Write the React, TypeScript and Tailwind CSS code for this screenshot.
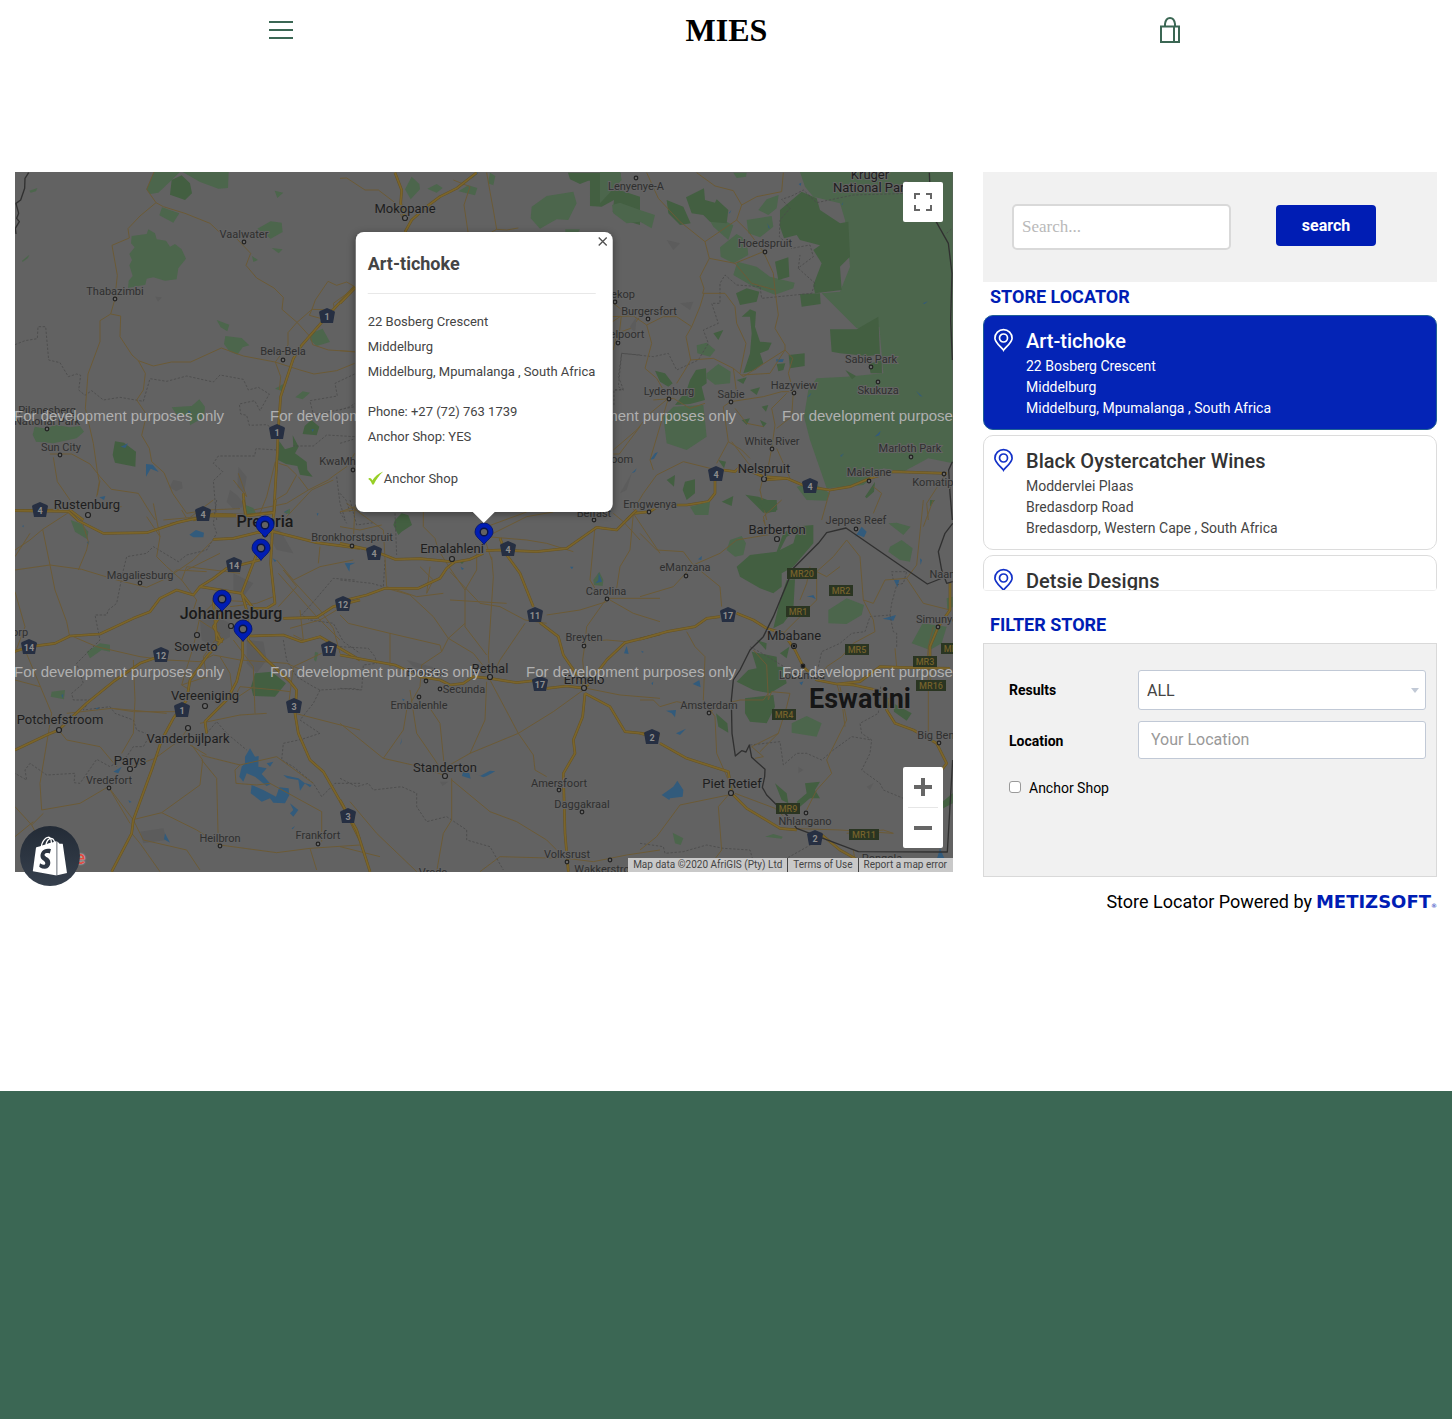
import React, { ChangeEvent, useState } from "react";
import { FaShopify } from "react-icons/fa";

interface Store {
  id: number;
  name: string;
  lines: string[];
}

interface MapSheet {
  x: number;
  y: number;
  park?: string;
  forest?: string;
  urban?: string;
  water?: string;
  dash?: string;
  road?: string;
  highway?: string;
  border?: string;
}

interface Place {
  name: string;
  x: number;
  y: number;
  size?: "md" | "lg" | "xl";
  dot?: [number, number];
}

const stores: Store[] = [
  {
    id: 1,
    name: "Art-tichoke",
    lines: ["22 Bosberg Crescent", "Middelburg", "Middelburg, Mpumalanga , South Africa"],
  },
  {
    id: 2,
    name: "Black Oystercatcher Wines",
    lines: ["Moddervlei Plaas", "Bredasdorp Road", "Bredasdorp, Western Cape , South Africa"],
  },
  { id: 3, name: "Detsie Designs", lines: [] },
];

// Each sheet is drawn at three times the map scale from its own origin
const sheets: MapSheet[] = [
  {
    x: 0,
    y: 160,
    park:
      "M395 228L440 222 445 208 465 220 470 238 498 242 510 260 525 252 545 268 558 296 535 325 530 358 495 362 460 352 440 356 436 374 384 384 386 362 398 348 388 316 396 300 388 282 404 262 393 250ZM440 88L462 36 540 36 505 70 475 98 450 102ZM548 36L686 36 684 84 655 86 600 66ZM486 142L538 160 520 188 478 166ZM772 206L812 184 845 188 848 216 812 236 788 220ZM824 92L850 98 832 114ZM88 92L112 84 108 94 92 98ZM66 302L88 284 84 294 68 306ZM650 480L688 494 682 514 662 502ZM676 528L725 534 748 556 728 562 712 584 688 574 672 552ZM932 520L968 506 990 546 950 558 930 540ZM515 742L575 738 598 718 615 740 612 772 570 796 568 766 530 764ZM104 800L140 806 165 794 210 802 240 798 252 815 230 835 160 850 108 845 98 824ZM815 264L848 268 836 280ZM756 288L774 300 760 306ZM825 686L850 672 848 694ZM886 712L908 694 930 698 908 718ZM760 1044L734 1034 738 1064 768 1060Z",
    forest:
      "M515 60L545 46 570 70 576 100 555 120 510 104ZM345 844L372 848 408 875 406 920 345 908 338 885ZM934 780L958 800 950 826 908 822 914 798ZM838 844L855 868 880 860 878 826 896 860 885 880 920 906 922 930 938 950 900 944 892 918 858 912 834 900Z",
    urban:
      "M715 920L740 950 732 1000 712 980ZM520 960L545 965 548 985 528 994 508 982ZM690 990L712 1006 738 1040 700 1046 680 1026ZM466 410L486 412 474 425Z",
    water:
      "M438 950L438 912 458 914 476 936 452 926ZM362 860L384 850 376 864ZM298 1012L316 1008 312 1020ZM564 750L574 758 566 760ZM934 808L942 808 938 816ZM852 1056L866 1048 860 1062Z",
    dash:
      "M45 554L75 542 112 536 114 500 137 500 146 600 180 608 205 650 230 642 242 646 236 690 255 706 275 692 310 720 360 712 430 724 450 656 500 664 560 648 640 666 660 645 730 658 745 690 775 682 808 702 780 752 764 722 718 732 722 762 740 766 748 796 800 794 840 820 830 870 768 866 764 888 655 888 640 910 668 935 640 962 650 1080M1064 642L1005 670 1012 708 930 722 940 765 1064 740M1064 830L980 825 940 858 880 858M1010 950L1020 1030 1036 1080",
    road:
      "M462 36L440 88 468 128 420 168 384 206 388 234 336 256 352 346 344 420 332 462 300 482 300 545 264 642 256 745 280 850 292 935 298 965 290 1010M468 128L490 140 555 160 630 190 660 218 710 236 752 280 738 316 770 354 822 384 850 412 846 448 892 488 932 532 938 554 985 570 1064 575M332 462L362 468 360 530 396 585 415 602 460 618 515 606 572 606 664 564 730 588 825 606 900 630 942 642 1010 632 1064 610M415 602L436 640 430 690 410 720 440 764 425 826 448 865 455 905 492 938 518 1000 560 1060M1064 384L1000 430 1004 450 936 448 946 420 984 364 1010 376 1040 366 1064 380M936 448L890 488 864 518 864 555 826 606 842 650 838 690M936 448L928 466 980 480M150 882L215 882 270 912 300 950 334 988 415 1000 446 1050 466 1080M160 892L172 965 210 1020 M300 962L292 1005M320 1042L365 1040M826 1020L860 1000 890 945 862 918 836 910M780 1060L800 1010 826 905M760 1050L860 1030 925 990 895 950M925 990L985 960 1000 948 1040 920 1064 880M860 1070L935 990 1000 960M560 1060L620 1050 720 1046M700 960L740 1010 715 940",
    highway:
      "M1064 380L980 470 905 556 880 596 842 710 834 820 832 880 820 1080M45 1052L210 1050 250 1080M580 1080L640 1062 740 1066 820 1056M730 1000L736 1066",
    border: "M86 38L75 55 74 85 62 120 48 130 56 160 50 175 58 185 46 205 48 222",
  },
  {
    x: 340,
    y: 160,
    park:
      "M195 88L215 50 238 72 240 88 212 118ZM262 86L290 72 308 84 290 98ZM355 94L385 76 412 84 405 106ZM450 38L466 48 460 76 444 70ZM575 140L620 108 700 95 710 130 685 180 650 178 600 206 572 175ZM676 208L720 208 715 216 676 216Z",
    forest:
      "M684 38L842 38 840 60 745 62 720 72 690 58ZM750 60L820 56 838 90 900 110 900 195 850 180 818 155 822 120 785 140 750 138Z",
    water: "M388 54L408 36 415 38 398 54ZM875 940L890 925 885 936Z",
    dash:
      "M900 585L845 580 835 680 850 690 822 690 822 740M0 750L30 740 45 730M0 850L40 838M0 1000L18 1020 30 1056M0 1056L20 1090",
    road:
      "M0 55L20 54 75 90 115 90 165 128 190 180M340 60L390 80 372 135 384 216M440 38L450 95 460 150 470 208 455 216M470 208L500 210 535 204M900 470L872 505 830 520 820 570M900 800L862 850 838 882 820 882M0 572L45 576M820 430L846 450 838 520M0 1056L45 1040 40 1140M900 1140L850 1085 820 1060M440 1130L560 1070 640 1056",
    highway: "M165 38L185 90 182 130 195 175M410 38L350 85 300 110 260 140 215 180 195 216M45 384L0 430",
  },
  {
    x: 600,
    y: 160,
    park:
      "M600 36L1058 36 1058 910 985 895 910 935 850 925 790 975 680 985 630 840 612 770 625 690 650 655 740 650 850 640 838 500 770 505 665 400 720 395 750 320 735 180 720 130 640 110 615 80ZM0 36L60 36 65 60 0 130ZM36 135L60 128 120 150 165 165 155 205 120 185 80 190 40 160ZM320 165L370 180 400 196 385 240 340 200ZM360 262L410 222 440 240 445 285 400 310 362 290ZM400 345L412 305 470 320 510 350 584 368 580 385 525 404 460 380ZM475 150L500 118 536 105 530 145 505 165ZM440 180L515 168 520 200 480 232 445 220ZM320 640L355 612 392 635 390 670 345 674 320 655ZM190 770L220 740 310 735 320 830 260 870 200 850ZM590 980L640 968 690 1000 680 1022 620 1020ZM290 556L320 548 346 570 330 590 292 580ZM400 38L440 38 438 50 410 54Z",
    forest:
      "M258 112L312 85 315 120 345 128 350 118 385 150 380 190 330 185 310 165 275 160ZM200 120L250 140 272 190 240 195 205 160ZM540 150L605 95 650 115 660 150 720 190 745 185 750 290 720 320 725 390 645 400 640 375 665 310 640 270 660 256 600 240 590 225 552 235 540 200ZM525 305L565 292 568 350 535 360ZM600 402L660 400 662 432 605 440ZM690 508L770 508 835 470 840 585 800 588 720 580 695 575ZM566 585L614 580 614 618 570 625ZM165 632L195 640 218 670 205 680 180 665ZM288 630L318 625 320 670 305 680 315 720 270 732 225 735 260 690 270 660ZM436 1004L475 1010 530 1030 528 1055 490 1058ZM736 630L768 648 756 658ZM806 612L845 600 846 640 812 640ZM795 1010L825 965 822 995 800 1015ZM408 400L440 385 478 395 470 425 420 435ZM425 470L450 448 468 455 465 500 480 545 515 548 505 570 480 580 490 610 465 630 430 640 450 580 455 520 450 470ZM200 960L225 945 222 980ZM255 965L285 958 285 1000 260 1020 248 990ZM410 660L440 652 430 672ZM450 690L480 682 470 705ZM485 740L505 735 498 755ZM425 780L450 775 440 795ZM480 780L500 790 490 802ZM530 612L556 610 550 630 535 634ZM340 520L370 510 355 540ZM355 900L378 905 372 925ZM365 1025L400 1008 395 1038Z",
    urban: "M0 570L20 560 15 600ZM90 500L110 470 105 520ZM240 430L280 425 270 450ZM200 240L240 250 220 270ZM60 1000L95 940 80 990Z",
    water:
      "M150 900L165 880 174 876 162 896ZM528 598L552 598 548 606 530 606ZM724 136L730 126 728 134ZM386 160L394 150 390 160ZM502 190L510 205 506 205ZM596 72L604 68 602 78ZM622 712L634 698 630 708ZM948 692L968 710 960 708ZM720 888L732 880 724 890ZM824 830L842 812 838 826ZM784 544L804 546ZM968 430L984 424 974 432Z",
    dash:
      "M990 85L930 100 760 105 650 128 610 90 575 108 545 118 570 145 540 180 538 230 575 265 630 255 640 290 600 320 595 325 645 370 635 400 485 415 480 380 410 375 375 345 360 370 360 430 335 430 355 490 310 510 325 550 295 600 230 630 205 580 160 590 65 580 55 650 70 688 40 690M595 325L600 285M1040 220L1056 205",
    road:
      "M140 38L175 115 240 185 315 245 328 295 405 310 455 370 525 390M290 38L345 78 400 92 425 135 410 180 315 245M425 135L470 110 545 95 550 38M410 180L445 215 490 275 520 340 525 390 535 465 525 505 555 555 555 570 430 650 400 625M328 295L300 350 312 385 308 400 375 400 405 440 410 490 438 550 420 640M490 275L405 310M312 400L300 440 275 500 258 530 272 600 255 630 230 670M275 500L230 470 190 470 140 495 155 550 135 625 170 655 205 715 150 760 110 810 40 870M555 570L578 595 565 640 580 695 545 695 490 710 392 725 370 740 385 845 350 910M205 715L150 900 160 930M560 700L515 745 525 795 515 865 500 945M580 695L575 770 530 805M395 845L445 910 490 950M405 745L440 790 490 800M385 845L425 870 450 895M350 930L250 905 170 945 130 1000 100 1050M272 600L340 595 400 625M400 625L410 700M425 645L510 640 555 570M160 720L220 715 270 745 315 730M490 950L480 990 500 1080M690 990L665 1080M820 980L845 1000 820 1060M1035 945L980 1030 985 1080M30 470L100 468 140 495M0 540L30 490 60 470M530 865L570 955",
    highway:
      "M345 940L345 1000 325 1025 260 1035 180 1035 150 1055 100 1060 80 1080M370 930L405 935 420 920 490 950 560 955 620 980 690 990 750 980 810 955 880 935 1040 940M490 960L560 955",
    border: "M988 38L990 85 1000 170 1045 250 1056 340 1052 480 1057 600M1057 905L1046 930 1050 1000 1057 1080",
  },
  {
    x: 0,
    y: 500,
    park:
      "M212 60L245 72 265 95 262 118 225 95ZM260 455L300 430 330 434 330 455 305 450 270 475ZM155 575L195 570 192 598 152 590ZM945 455L955 458 948 485 942 480ZM735 15L765 30 740 35ZM852 38L870 26 870 42Z",
    forest: "M765 520L815 515 858 550 825 590 760 588 753 560Z",
    urban:
      "M600 360L650 350 690 370 690 410 640 440 605 420ZM740 420L790 425 800 480 770 520 740 490ZM790 80L840 90 880 160 830 150ZM420 995L490 985 500 1020 430 1030ZM700 220L760 250 730 290 700 270Z",
    water:
      "M568 104L588 90 612 98 610 112 580 112ZM750 745L765 770 776 768 775 800 800 805 785 822 812 852 800 858 765 830 740 820 730 845 718 830 725 800 735 790 735 770ZM800 790L820 785 810 800ZM850 825L895 835 915 850 900 872 895 840 862 835ZM755 855L790 870 828 890 838 862 866 865 868 885 855 910 820 908 810 895 785 905 752 880ZM870 910L895 930 880 950 870 940 880 930ZM340 815L365 800 355 820ZM495 1000L510 1028 492 1018ZM1034 190L1066 188 1050 196 1048 215ZM285 625L300 622 292 630ZM184 585L190 582 188 595ZM385 900L395 906 388 908ZM818 175L830 182 824 186ZM66 78L72 76 70 82ZM260 126L268 124 265 134ZM950 40L956 40 952 48ZM912 848L935 855 930 862ZM875 985L885 978 878 988Z",
    dash:
      "M650 0L640 70 650 100 620 150 560 165 535 185 460 140 440 160 380 170 370 210 362 250 350 310 325 330 320 345 285 345 300 420 250 470 230 490 250 550 215 580 220 600 270 600 250 630 330 620 345 640 400 660 410 690 450 705 430 740 400 740 380 770 330 800 290 778 240 850 222 848 225 820 140 825 90 790 75 810 80 840 45 820M1064 240L1000 235 945 300 905 345 930 360 1000 370 1030 425 1080 460M850 420L860 480 890 530 940 560 960 570 1060 565 1080 570M960 570L940 610 900 660 960 700 905 718 850 730 845 780 880 800 940 850 965 890 1005 850 1080 850M620 700L650 665 680 700 740 750",
    road:
      "M45 150L90 120 128 88 210 35M45 210L150 195 245 208 350 240 440 262 500 235 580 180 600 160 640 120M45 170L90 100M150 195L128 88M150 195L165 270 200 365 208 405M208 405L290 440 420 470 500 480 600 485 640 465 720 480 860 490 905 510M45 275L75 380 45 460M75 450L155 640 120 850 125 930M265 125L260 150 235 210M245 60L265 125M460 10L480 110 470 170 500 200 545 240 590 300 575 345 620 375 660 400M500 235L530 210 620 215M545 240L560 200 720 220M660 160L560 210M200 640L335 625 500 640M335 625L400 635 560 635M400 480L405 600 400 700 365 760M176 690L200 720 300 740 350 800M125 930L240 910 325 860 390 970M560 690L540 720 465 775 395 800M395 960L485 938 600 855 608 780 575 735M485 938L590 990 660 1035 830 1058 930 1045 1080 1035M605 780L650 835 655 1035M605 765L620 770 720 795 705 810 708 850 770 855 810 850 965 935 965 1025M720 795L830 770 940 850M560 505L580 440 600 350 650 300 740 305 780 340M560 505L545 555 570 570M820 290L770 310 690 320M850 210L960 330 1000 385 1020 460M850 210L890 260 835 320M830 180L880 240 960 200 1060 180M835 220L950 350 1020 420M960 140L955 190M700 420L760 500 765 640M760 560L700 600 720 560 830 570 870 575M965 460L880 500 865 620M660 470L690 520 700 600M660 400L610 470 620 530 545 555M870 385L960 360 1010 330M880 405L910 420 900 330M45 920L95 975 130 940M45 1010L100 965M95 975L150 1080M395 1000L420 1030 480 1115M930 1045L950 1110M325 860L400 960 430 1020 560 1050 600 1110M45 540L120 560M885 640L1080 690M570 735L620 765M600 670L720 645 800 640M640 0L560 60 510 70M545 30L560 55M490 60L600 50 700 50M440 50L480 110",
    highway:
      "M45 32L205 34 235 62 310 100 440 98 530 68 620 48 740 48 820 38M730 0L738 48M826 0L818 80 812 190 825 310 800 325 760 325 725 280 765 175 780 140M640 118L700 115 770 98 820 95 950 128 1080 145M45 454L90 440 165 430 210 408 300 402 400 355 450 335 480 295 530 270 580 285 600 260 640 235 680 205 780 180M600 260L725 280M725 280L740 330 745 420 790 470 870 545 890 570 885 640 895 700 930 780 970 815 1030 920 1080 1020M640 300L650 420 665 425 640 380 665 340M750 408L850 405 905 425 960 410 1080 480M850 355L950 352 1000 320 1080 300M670 415L620 470 570 540 560 600 520 655 485 720 455 810 400 960 395 1000 335 1115M728 420L728 470 710 545 680 600 615 665 620 700M45 750L140 705 176 690 260 610 340 545 420 490 490 465",
  },
  {
    x: 340,
    y: 500,
    park: "M760 240L778 215 790 240 788 258 762 255Z",
    forest: "M165 60L185 40 205 46 216 75 185 95 175 105 160 75ZM360 186L374 184 366 192Z",
    urban: "M200 480L310 510 300 530 220 500ZM300 845L325 845 308 858Z",
    water:
      "M776 218L786 245 766 250 775 240ZM852 460L860 438 866 462ZM366 828L370 812 388 820 392 836ZM400 820L420 828 450 812 466 814 440 828 430 832ZM362 200L372 206 366 210ZM690 200L700 200 696 208ZM904 452L912 456 906 458ZM934 550L940 545 938 556ZM180 734L186 715 184 728ZM186 596L194 598 190 604Z",
    dash:
      "M0 835L50 860 85 850 100 870 185 860 230 880 230 920 260 965 320 950 380 990 380 1020 450 1040 490 1110M30 0L50 75 100 68M135 180L130 260 95 250 0 240M0 440L85 445 105 470 110 490 70 495 65 570 0 565M165 40L170 165",
    road:
      "M250 36L250 80 285 115 295 150 330 205 375 270 375 380 440 465M330 215L420 310 480 320 555 360 620 370M455 170L460 230 445 465 450 530M0 345L25 370 150 400 300 435 305 455 245 495 240 560 200 630 190 690 130 775 0 670M20 10L130 90 140 260M0 80L60 90 125 75M140 265L210 285 280 350 325 415 400 460 440 510M150 400L150 500M555 370L480 480 460 520M440 545L435 660 390 760 320 800M450 540L535 700 580 765 585 810 620 830M730 570L640 635 535 700 390 760M210 570L230 700 285 780 310 820M260 610L300 670 315 820M335 835L335 960 310 1000 290 1115M335 840L450 935 530 965 620 1020 670 1070M130 775L240 800 310 825M765 80L750 240 765 265M880 40L870 150 840 200 830 265M800 295L740 380 735 430 728 480 735 560M620 345L720 330 800 305M800 295L960 295M810 300L880 340 960 365M745 425L800 420 860 425M0 35L50 30M440 110L560 120 620 130 700 155M440 80L560 36M270 200L260 280 280 240 240 200M410 160L410 210 375 270M960 595L840 585 740 565M680 1075L760 1085 860 1065 960 1050M420 1115L480 1070 660 1075M0 1040L120 1070M30 905L110 1000 230 1115M305 455L325 415 375 370M500 310L330 300M140 260L230 290 310 280M455 180L435 120M880 40L960 160",
    highway:
      "M0 130L100 152 165 178 240 176 345 186 390 178 430 160M0 305L80 285 135 265 235 265 300 235 320 205 345 185M438 152L480 150 590 155 680 145 770 82 830 90 890 30M480 115L500 165 540 220 580 320M600 368L655 410 670 465 735 560M0 465L80 480 165 495 240 530 300 540 330 555 370 550 400 530 450 535 530 548 600 540M620 565L680 558 735 565 800 480 855 428 960 402M735 580L728 650 700 720 705 760 670 820 675 1000 685 1115M735 580L810 620 855 695 960 705M0 900L50 990 90 1115",
  },
  {
    x: 640,
    y: 500,
    park:
      "M270 120L305 108 318 130 310 165 285 170 260 150ZM565 330L620 295 672 315 665 345 620 372 565 370ZM750 140L785 120 818 145 810 185 780 180 745 155ZM455 670L500 648 545 670 530 710 455 698ZM815 430L848 370 920 380 905 430 870 450ZM98 998L130 1015 122 1035 105 1030ZM375 1010L400 1002 428 1010 425 1016ZM745 70L770 68 812 80 790 105ZM920 295L938 290 938 320 922 330ZM150 20L210 5 205 45 165 45Z",
    forest:
      "M290 200L330 165 410 155 430 100 460 80 520 75 520 130 460 200 425 220 425 260 400 280 360 265 300 230ZM440 240L465 238 460 330 430 370 400 385 420 300ZM335 455L410 470 412 500 430 500 440 550 390 580 340 570 290 545 325 510 350 505ZM315 595L400 585 405 620 380 670 330 665 315 640ZM228 640L262 670 265 698 235 680ZM350 420L380 430 378 450ZM420 460L448 440 440 475ZM405 850L440 880 445 910 425 900ZM495 850L540 845 525 870 540 895 510 895 480 920 470 905 500 880ZM760 610L815 640 800 662 762 635ZM350 0L410 0 412 30 380 40ZM870 0L885 0 870 20ZM850 935L890 920 938 880 938 910 890 935ZM470 95L440 110 420 150 460 130Z",
    urban: "M700 850L690 870 680 860ZM475 800L490 810 475 820Z",
    water:
      "M645 110L665 80 680 95 672 112 655 105ZM500 290L520 285 528 298 515 292ZM762 240L778 240 772 262ZM728 356L768 345 760 362ZM65 885L100 860 112 842 130 870 128 890 90 895 88 900ZM108 700L138 686 120 705ZM78 632L108 630 105 652 95 640ZM158 552L178 540 182 562ZM840 175L846 180 842 195ZM890 1080L900 1045 915 1080 915 1110 895 1110ZM174 178L186 168 184 180ZM478 548L490 544 485 556Z",
    dash:
      "M330 440L375 465 440 505 500 520 560 530M535 500L545 455 600 430 635 400 675 395 690 350 750 345 760 395 770 400 770 445M760 240L755 215 800 215 790 250 770 255 755 310 750 345M722 560L715 640 660 670 665 700 695 720 690 760 665 810 720 850 730 870 790 895M330 735L420 725 430 795 470 760 500 760 545 780 580 750 635 710 695 720M0 1030L70 1040 75 1060 130 1055 200 1035 250 1045 330 1050 340 1085 440 1075 520 1030",
    road:
      "M0 100L50 150 130 155 160 195 240 160 290 120 380 105 420 100M160 195L240 260 245 320M0 290L100 260 160 195M140 395L165 440 195 470 190 600 225 650 230 760 265 840M0 600L40 600 60 620 110 605 190 620M207 638L240 615 300 600 370 600 385 580M340 450L380 495 385 600 395 575 450 580 440 620 415 700 360 755M415 700L335 740 370 770 345 775M620 120L580 170 530 215 530 300 480 350 430 400M530 215L560 230 600 200M620 120L660 170 670 300 700 310 735 240 800 235 830 195 850 0M800 235L850 310 930 330M670 300L700 360 705 395 640 430 605 470 560 500 540 540M600 560L620 660 560 780 575 820 530 870 500 930M765 445L770 500M865 480L865 695 M865 560L880 510M880 380L865 440 860 500M590 550L605 600 615 680M285 880L405 925 470 985M440 985L600 990 760 1000 730 990 620 1000M265 885L120 915 50 1010 0 1050M265 885L235 920 245 1050 200 1110M510 200L500 250 480 300M370 60L385 100M640 1050L645 1080M425 0L370 50 375 70M880 0L850 80",
    highway:
      "M0 418L80 395 165 380 200 355 240 350M290 340L340 360 380 385 430 400 465 450 490 500 530 540 590 552 660 545 720 500 780 502 930 505M590 552L640 555 710 570 745 600 740 630 765 670 820 690 890 730 920 790 905 810M60 730L140 775 265 815 275 880 320 925 420 985 470 990M540 1000L600 1050 650 1078M870 500L870 440 895 380 930 330 930 250M0 700L20 705",
    border:
      "M938 70L915 100 895 155 905 210 920 250 938 245M930 225L862 252 618 84 560 98 535 130 460 205 400 350 370 410 330 450 300 510 280 540 274 600 276 700 286 768 305 752 318 756 328 735 335 772 375 808 374 830 367 862 380 885 440 945 470 985 655 1055 922 1056 938 780",
  },
];

const places: Place[] = [
  { name: "Mokopane", x: 405, y: 213, size: "md", dot: [405, 218] },
  { name: "Vaalwater", x: 244, y: 238, dot: [244, 242] },
  { name: "Thabazimbi", x: 115, y: 295, dot: [115, 299] },
  { name: "Bela-Bela", x: 283, y: 355, dot: [283, 360] },
  { name: "Pilanesberg", x: 47, y: 414 },
  { name: "National Park", x: 47, y: 425, dot: [47, 429] },
  { name: "Sun City", x: 61, y: 451, dot: [60, 455] },
  { name: "Rustenburg", x: 87, y: 509, size: "md", dot: [88, 515] },
  { name: "Lenyenye-A", x: 636, y: 190, dot: [636, 178] },
  { name: "Kruger", x: 870, y: 179, size: "md" },
  { name: "National Park", x: 872, y: 192, size: "md" },
  { name: "Hoedspruit", x: 765, y: 247, dot: [765, 252] },
  { name: "ekop", x: 623, y: 298, dot: [615, 302] },
  { name: "Burgersfort", x: 649, y: 315, dot: [648, 319] },
  { name: "elpoort", x: 627, y: 338, dot: [618, 343] },
  { name: "Sabie Park", x: 871, y: 363, dot: [871, 367] },
  { name: "Skukuza", x: 878, y: 394, dot: [878, 382] },
  { name: "Lydenburg", x: 669, y: 395, dot: [669, 399] },
  { name: "Sabie", x: 731, y: 398, dot: [731, 402] },
  { name: "Hazyview", x: 794, y: 389, dot: [794, 393] },
  { name: "White River", x: 772, y: 445, dot: [772, 449] },
  { name: "Marloth Park", x: 910, y: 452, dot: [911, 457] },
  { name: "Nelspruit", x: 764, y: 473, size: "md", dot: [764, 479] },
  { name: "Malelane", x: 869, y: 476, dot: [869, 481] },
  { name: "Komatipoort", x: 943, y: 486, dot: [944, 474] },
  { name: "oom", x: 622, y: 463 },
  { name: "KwaMhlanga", x: 351, y: 465, dot: [353, 470] },
  { name: "Belfast", x: 594, y: 517, dot: [594, 520] },
  { name: "Emgwenya", x: 650, y: 508, dot: [649, 512] },
  { name: "Jeppes Reef", x: 856, y: 524, dot: [856, 529] },
  { name: "Barberton", x: 777, y: 534, size: "md", dot: [777, 539] },
  { name: "Pretoria", x: 265, y: 527, size: "lg", dot: [265, 534] },
  { name: "Bronkhorstspruit", x: 352, y: 541, dot: [352, 546] },
  { name: "Emalahleni", x: 452, y: 553, size: "md", dot: [452, 559] },
  { name: "Magaliesburg", x: 140, y: 579, dot: [140, 583] },
  { name: "eManzana", x: 685, y: 571, dot: [686, 576] },
  { name: "Carolina", x: 606, y: 595, dot: [607, 599] },
  { name: "Johannesburg", x: 231, y: 619, size: "lg", dot: [231, 626] },
  { name: "Soweto", x: 196, y: 651, size: "md", dot: [197, 635] },
  { name: "orp", x: 20, y: 636 },
  { name: "Breyten", x: 584, y: 641, dot: [584, 646] },
  { name: "Mbabane", x: 794, y: 640, size: "md", dot: [794, 646] },
  { name: "Lobamba", x: 802, y: 679, dot: [803, 666] },
  { name: "Simunye", x: 937, y: 623, dot: [938, 627] },
  { name: "Naamacha", x: 956, y: 578 },
  { name: "Bethal", x: 490, y: 673, size: "md", dot: [490, 677] },
  { name: "Ermelo", x: 584, y: 684, size: "md", dot: [584, 688] },
  { name: "Evander", x: 426, y: 676, dot: [426, 681] },
  { name: "Secunda", x: 464, y: 693, dot: [440, 689] },
  { name: "Embalenhle", x: 419, y: 709, dot: [419, 697] },
  { name: "Vereeniging", x: 205, y: 700, size: "md", dot: [205, 706] },
  { name: "Potchefstroom", x: 60, y: 724, size: "md", dot: [59, 730] },
  { name: "Vanderbijlpark", x: 188, y: 743, size: "md", dot: [188, 728] },
  { name: "Parys", x: 130, y: 765, size: "md", dot: [130, 769] },
  { name: "Vredefort", x: 109, y: 784, dot: [109, 788] },
  { name: "Amsterdam", x: 709, y: 709, dot: [709, 713] },
  { name: "Eswatini", x: 860, y: 708, size: "xl" },
  { name: "Big Bend", x: 939, y: 739, dot: [939, 743] },
  { name: "Standerton", x: 445, y: 772, size: "md", dot: [445, 776] },
  { name: "Amersfoort", x: 559, y: 787, dot: [559, 790] },
  { name: "Daggakraal", x: 582, y: 808, dot: [582, 812] },
  { name: "Piet Retief", x: 732, y: 788, size: "md", dot: [731, 793] },
  { name: "Heilbron", x: 220, y: 842, dot: [220, 846] },
  { name: "Frankfort", x: 318, y: 839, dot: [318, 844] },
  { name: "Nhlangano", x: 805, y: 825, dot: [806, 813] },
  { name: "Volksrust", x: 567, y: 858, dot: [567, 862] },
  { name: "Wakkerstroom", x: 610, y: 873, dot: [610, 860] },
  { name: "Pongola", x: 882, y: 862 },
  { name: "Vrede", x: 433, y: 876 },
];

const nationalRoutes: [string, number, number][] = [
  ["1", 327, 316],
  ["1", 277, 432],
  ["4", 40, 510],
  ["4", 203, 514],
  ["14", 234, 565],
  ["4", 374, 553],
  ["4", 508, 549],
  ["12", 343, 604],
  ["14", 29, 647],
  ["12", 161, 655],
  ["17", 329, 649],
  ["1", 182, 710],
  ["3", 294, 706],
  ["3", 348, 816],
  ["11", 535, 615],
  ["17", 540, 684],
  ["17", 728, 615],
  ["2", 652, 737],
  ["2", 815, 838],
  ["4", 716, 474],
  ["4", 810, 486],
];

const regionalRoutes: [string, number, number][] = [
  ["MR20", 802, 573],
  ["MR2", 841, 590],
  ["MR1", 798, 611],
  ["MR5", 857, 649],
  ["MR3", 925, 661],
  ["MR6", 953, 648],
  ["MR16", 931, 685],
  ["MR4", 784, 714],
  ["MR9", 788, 808],
  ["MR11", 864, 834],
];

const pins: [number, number][] = [
  [265, 525],
  [261, 548],
  [222, 599],
  [243, 629],
  [484, 532],
];

const placeStyle = {
  sm: "fill-[#2f2f2f] text-[11px]",
  md: "fill-[#1e1e1e] text-[13px]",
  lg: "fill-[#191919] text-[16px] font-medium",
  xl: "fill-[#161616] text-[27px] font-bold",
};

const StoreMap: React.FC = () => {
  return (
    <svg
      className="block h-full w-full"
      viewBox="15 172 938 700"
      preserveAspectRatio="xMidYMid slice"
      role="img"
      aria-label="Map of stores"
    >
      <rect x="15" y="172" width="938" height="700" fill="#626262" />
      {sheets.map((sheet) => (
        <g
          key={`${sheet.x}-${sheet.y}`}
          transform={`translate(${sheet.x} ${sheet.y}) scale(0.33333)`}
          fill="none"
          strokeLinejoin="round"
        >
          <path d={sheet.park} fill="#4c664c" />
          <path d={sheet.forest} fill="#435f41" />
          <path d={sheet.urban} fill="#5c5c5c" />
          <path d={sheet.water} fill="#325b7c" />
          <path d={sheet.dash} stroke="#4a4a4a" strokeWidth="2.5" strokeDasharray="7 5" />
          <path d={sheet.road} stroke="#6b5a36" strokeWidth="3" />
          <path d={sheet.highway} stroke="#665324" strokeWidth="8" />
          <path d={sheet.highway} stroke="#7b652b" strokeWidth="5" />
          <path d={sheet.border} stroke="#303030" strokeWidth="4" />
        </g>
      ))}

      {nationalRoutes.map(([label, x, y]) => (
        <g key={`${label}-${x}`}>
          <path
            d={`M${x} ${y - 8}L${x + 7} ${y - 5}L${x + 8} ${y - 4}L${x + 6} ${y + 7}H${x - 6}L${x - 8} ${y - 4}L${x - 7} ${y - 5}Z`}
            fill="#262f42"
          />
          <text x={x} y={y + 4} textAnchor="middle" className="fill-[#8d8d8d] text-[9px] font-bold">
            {label}
          </text>
        </g>
      ))}
      {regionalRoutes.map(([label, x, y]) => (
        <g key={label}>
          <rect x={x - label.length * 3 - 3} y={y - 5} width={label.length * 6 + 6} height="11" fill="#2a3522" />
          <text x={x} y={y + 4} textAnchor="middle" className="fill-[#74612b] text-[9px] font-medium">
            {label}
          </text>
        </g>
      ))}

      {places.map(({ name, x, y, size, dot }) => (
        <g key={`${name}-${x}-${y}`}>
          {dot && (
            <circle cx={dot[0]} cy={dot[1]} r={size ? 2.5 : 1.8} fill="#6a6a6a" stroke="#222" strokeWidth="1.2" />
          )}
          <text
            x={x}
            y={y}
            textAnchor="middle"
            stroke="#646464"
            strokeWidth="2"
            paintOrder="stroke"
            className={placeStyle[size ?? "sm"]}
          >
            {name}
          </text>
        </g>
      ))}
      <circle cx="794" cy="646" r="1.4" fill="#161616" />
      <circle cx="803" cy="666" r="1.2" fill="#161616" />

      {[421, 677].map((y) =>
        [14, 270, 526, 782].map((x) => (
          <text
            key={`${x}-${y}`}
            x={x}
            y={y}
            className="fill-[#b0b0b0] font-['Liberation_Sans',Arial,sans-serif] text-[15px]"
          >
            For development purposes only
          </text>
        )),
      )}

      {pins.map(([x, y]) => (
        <g key={`${x}-${y}`} transform={`translate(${x} ${y})`}>
          <path
            d="M0 12.5C-2 9-9 5-9 0A9 9 0 0 1 9 0C9 5 2 9 0 12.5Z"
            fill="#001db4"
            stroke="#00126b"
            strokeWidth="0.8"
          />
          <circle r="3.8" fill="#626262" stroke="#0a1448" strokeWidth="1.4" />
        </g>
      ))}
    </svg>
  );
};

const PinIcon: React.FC = () => (
  <svg className="mt-3 h-6 w-5 shrink-0" viewBox="0 0 20 24" fill="none" stroke="currentColor" strokeWidth="1.7">
    <path d="M9.500 22.200C8 19.500 0.900 15 0.900 10.300A8.600 8.600 0 0 1 18.100 10.300C18.100 15 11 19.500 9.500 22.200Z" />
    <circle cx="9.500" cy="10" r="4" />
  </svg>
);

const InfoWindow: React.FC<{ onClose: () => void }> = ({ onClose }) => (
  <div className="absolute top-[60px] left-1/2 h-[280px] -translate-x-1/2 rounded-lg bg-white px-3 text-[13px] leading-[25px] whitespace-nowrap text-[#444] shadow-[0_2px_7px_1px_rgba(0,0,0,0.3)]">
    <button type="button" aria-label="Close" onClick={onClose} className="absolute top-1 right-1 p-px">
      <svg className="h-2.5 w-2.5" viewBox="0 0 10 10" stroke="#555" strokeWidth="1.4">
        <path d="M1 0.500L9 8.500M9 0.500L1 8.500" />
      </svg>
    </button>
    <div className="pr-[5px]">
      <h3 className="border-b border-[#e8e8e8] pt-[19px] pb-[17px] text-[18px] font-bold">Art-tichoke</h3>
      <p className="mt-[15px]">22 Bosberg Crescent</p>
      <p>Middelburg</p>
      <p>Middelburg, Mpumalanga , South Africa</p>
      <p className="mt-[15px]">Phone: +27 (72) 763 1739</p>
      <p>Anchor Shop: YES</p>
      <p className="mt-[17px] flex items-center">
        <svg className="h-4 w-4" viewBox="0 0 16 16">
          <path
            d="M0.500 8C1.500 6.500 3.500 6.800 4.500 9.500C7 5.500 10.500 2.500 15.500 0.500C11.500 4 8.500 8.500 6 13.500H4.500C3.500 11 2.500 9 0.500 8Z"
            fill="#97cf26"
          />
        </svg>
        Anchor Shop
      </p>
    </div>
    <div className="absolute top-full left-1/2 -translate-x-1/2">
      <svg className="h-3 w-6" viewBox="0 0 24 12">
        <path d="M1 0H23L12 11Z" fill="#fff" />
      </svg>
    </div>
  </div>
);

const App: React.FC = () => {
  const [selected, setSelected] = useState<number>(1);
  const [showInfo, setShowInfo] = useState(true);
  const [searchQuery, setSearchQuery] = useState("");
  const [location, setLocation] = useState("");

  const handleSearchChange = (event: ChangeEvent<HTMLInputElement>) => {
    setSearchQuery(event.target.value);
  };

  const handleSelect = (id: number) => {
    setSelected(id);
    setShowInfo(id === 1);
  };

  return (
    <div className="flex min-h-screen flex-col bg-white font-[Roboto,sans-serif] text-black">
      <header className="mx-auto flex h-[60px] w-full max-w-[914px] items-center justify-between">
        <button type="button" aria-label="Menu" className="flex w-6 flex-col gap-1.5">
          <span className="h-0.5 w-full bg-[#3b6754]" />
          <span className="h-0.5 w-full bg-[#3b6754]" />
          <span className="h-0.5 w-full bg-[#3b6754]" />
        </button>
        <a href="#" className="font-['Liberation_Serif',serif] text-[32px] leading-none font-bold">
          MIES
        </a>
        <a href="#" aria-label="Cart" className="pr-[3px]">
          <svg className="h-7 w-5" viewBox="0 0 20 28" fill="none" stroke="#3b6754" strokeWidth="2">
            <path d="M1 10.500H19V26H1ZM14 10.500V26" />
            <path d="M5 10.500V8C6 0 14 0 15 8V10.500" />
          </svg>
        </a>
      </header>

      <main className="grid grid-cols-3 gap-[30px] px-[15px] pt-28 pb-44">
        <section className="relative col-span-2 h-[700px]">
          <StoreMap />
          {showInfo && <InfoWindow onClose={() => setShowInfo(false)} />}

          <button
            type="button"
            aria-label="Toggle fullscreen view"
            className="absolute top-2.5 right-2.5 flex h-10 w-10 items-center justify-center rounded-xs bg-white"
          >
            <svg className="h-[18px] w-[18px]" viewBox="0 0 18 18" fill="none" stroke="#666" strokeWidth="2">
              <path d="M1 6V1H6M12 1H17V6M17 12V17H12M6 17H1V12" />
            </svg>
          </button>

          <div className="absolute right-2.5 bottom-6 flex w-10 flex-col items-center rounded-xs bg-white">
            <button type="button" aria-label="Zoom in" className="flex h-10 w-10 items-center justify-center">
              <svg className="h-[18px] w-[18px]" viewBox="0 0 18 18" stroke="#666" strokeWidth="4">
                <path d="M0 9H18M9 0V18" />
              </svg>
            </button>
            <span className="h-px w-[30px] bg-[#e6e6e6]" />
            <button type="button" aria-label="Zoom out" className="flex h-10 w-10 items-center justify-center">
              <svg className="h-[18px] w-[18px]" viewBox="0 0 18 18" stroke="#666" strokeWidth="4">
                <path d="M0 9H18" />
              </svg>
            </button>
          </div>

          <div className="absolute right-0 bottom-0 flex h-3.5 items-center bg-[#c9c9c9] text-[10px] leading-[14px] whitespace-nowrap text-[#444]">
            <span className="px-[5px]">Map data ©2020 AfriGIS (Pty) Ltd</span>
            <a href="#" className="border-l border-[#444] px-[5px]">
              Terms of Use
            </a>
            <a href="#" className="border-l border-[#444] pr-1.5 pl-[5px]">
              Report a map error
            </a>
          </div>

          <span className="absolute bottom-0 left-[60px] text-[19px] font-medium text-[#e04a3f] [text-shadow:0_0_2px_#fff]">
            e
          </span>
          <a
            href="#"
            aria-label="Shopify"
            className="absolute -bottom-3.5 left-[5px] flex h-[60px] w-[60px] items-center justify-center rounded-full bg-gradient-to-b from-[#232b36] to-[#36404d] text-white"
          >
            <FaShopify className="h-10 w-10" />
          </a>
        </section>

        <aside>
          <form
            className="flex h-[110px] items-center gap-[45px] bg-[#f1f1f1] px-[29px]"
            onSubmit={(event) => event.preventDefault()}
          >
            <input
              type="text"
              aria-label="Search"
              value={searchQuery}
              onChange={handleSearchChange}
              placeholder="Search..."
              className="h-[46px] w-[219px] min-w-0 rounded-[5px] border-2 border-[#d9d9d9] bg-white px-2 font-['Liberation_Serif',serif] text-[17px] placeholder:text-[#b9b9b9] focus:outline-none"
            />
            <button
              type="submit"
              className="mb-1 h-[41px] w-[100px] rounded-[4px] bg-[#001db4] pt-0.5 text-[16px] font-bold text-white"
            >
              search
            </button>
          </form>

          <h2 className="px-[7px] pt-px pb-1 text-[18px] leading-[28px] font-bold text-[#001db4]">STORE LOCATOR</h2>
          <ul className="h-[276px] overflow-y-auto rounded-[4px] border-b border-[#eee] [scrollbar-width:none]">
            {stores.map((store) => (
              <li key={store.id} className="mb-[5px]">
                <button
                  type="button"
                  onClick={() => handleSelect(store.id)}
                  className={`flex h-[115px] w-full items-start gap-3 rounded-[10px] border px-2.5 text-left ${
                    selected === store.id
                      ? "border-[#1f5f96] bg-[#0424b6] text-white"
                      : "border-[#dcdcdc] bg-white text-[#444]"
                  }`}
                >
                  <span className={selected === store.id ? "text-white" : "text-[#1432c8]"}>
                    <PinIcon />
                  </span>
                  <span className="block pt-2.5 text-[14px] leading-[21px]">
                    <span
                      className={`block text-[20px] leading-[30px] font-medium ${
                        selected === store.id ? "text-white" : "text-[#333]"
                      }`}
                    >
                      {store.name}
                    </span>
                    {store.lines.map((line) => (
                      <span key={line} className="block">
                        {line}
                      </span>
                    ))}
                  </span>
                </button>
              </li>
            ))}
          </ul>

          <h2 className="mt-5 px-[7px] pb-1 text-[18px] leading-[28px] font-bold text-[#001db4]">FILTER STORE</h2>
          <div className="flex h-[234px] flex-col border border-[#d9d9d9] bg-[#f1f1f1] py-[26px] pr-2.5 pl-[25px] text-[14px]">
            <div className="flex items-center">
              <label htmlFor="results" className="w-[129px] shrink-0 font-bold">
                Results
              </label>
              <div className="relative flex-1">
                <select
                  id="results"
                  className="h-10 w-full appearance-none rounded-[3px] border border-[#c1c9d6] bg-white px-2 pt-0.5 text-[16px] text-[#444]"
                >
                  <option>ALL</option>
                </select>
                <svg className="pointer-events-none absolute top-[18px] right-[7px] h-[5px] w-2" viewBox="0 0 8 5">
                  <path d="M0 0H8L4 5Z" fill="#c1c9d6" />
                </svg>
              </div>
            </div>
            <div className="mt-[11px] flex items-center">
              <label htmlFor="location" className="w-[129px] shrink-0 pt-0.5 font-bold">
                Location
              </label>
              <input
                id="location"
                type="text"
                value={location}
                onChange={(event) => setLocation(event.target.value)}
                placeholder="Your Location"
                className="h-[38px] min-w-0 flex-1 rounded-[3px] border border-[#c1c9d6] bg-white px-3 pb-0.5 text-[16px] placeholder:text-[#999]"
              />
            </div>
            <label className="mt-[19px] flex items-center gap-2">
              <input
                type="checkbox"
                className="mb-1 h-3 w-3 appearance-none rounded-[3px] border border-[#9a9a9a] bg-white checked:bg-[#001db4]"
              />
              Anchor Shop
            </label>
          </div>

          <p className="mt-[11px] flex items-center justify-end gap-1 text-[18px] whitespace-nowrap">
            Store Locator Powered by
            <a
              href="#"
              className="flex items-end font-['DejaVu_Sans',sans-serif] text-[18px] leading-[27px] font-bold text-[#001db4]"
            >
              METIZSOFT
              <span className="text-[6px] leading-[18px] font-normal">®</span>
            </a>
          </p>
        </aside>
      </main>

      <footer className="flex-1 bg-[#3b6754]" />
    </div>
  );
};

export default App;
